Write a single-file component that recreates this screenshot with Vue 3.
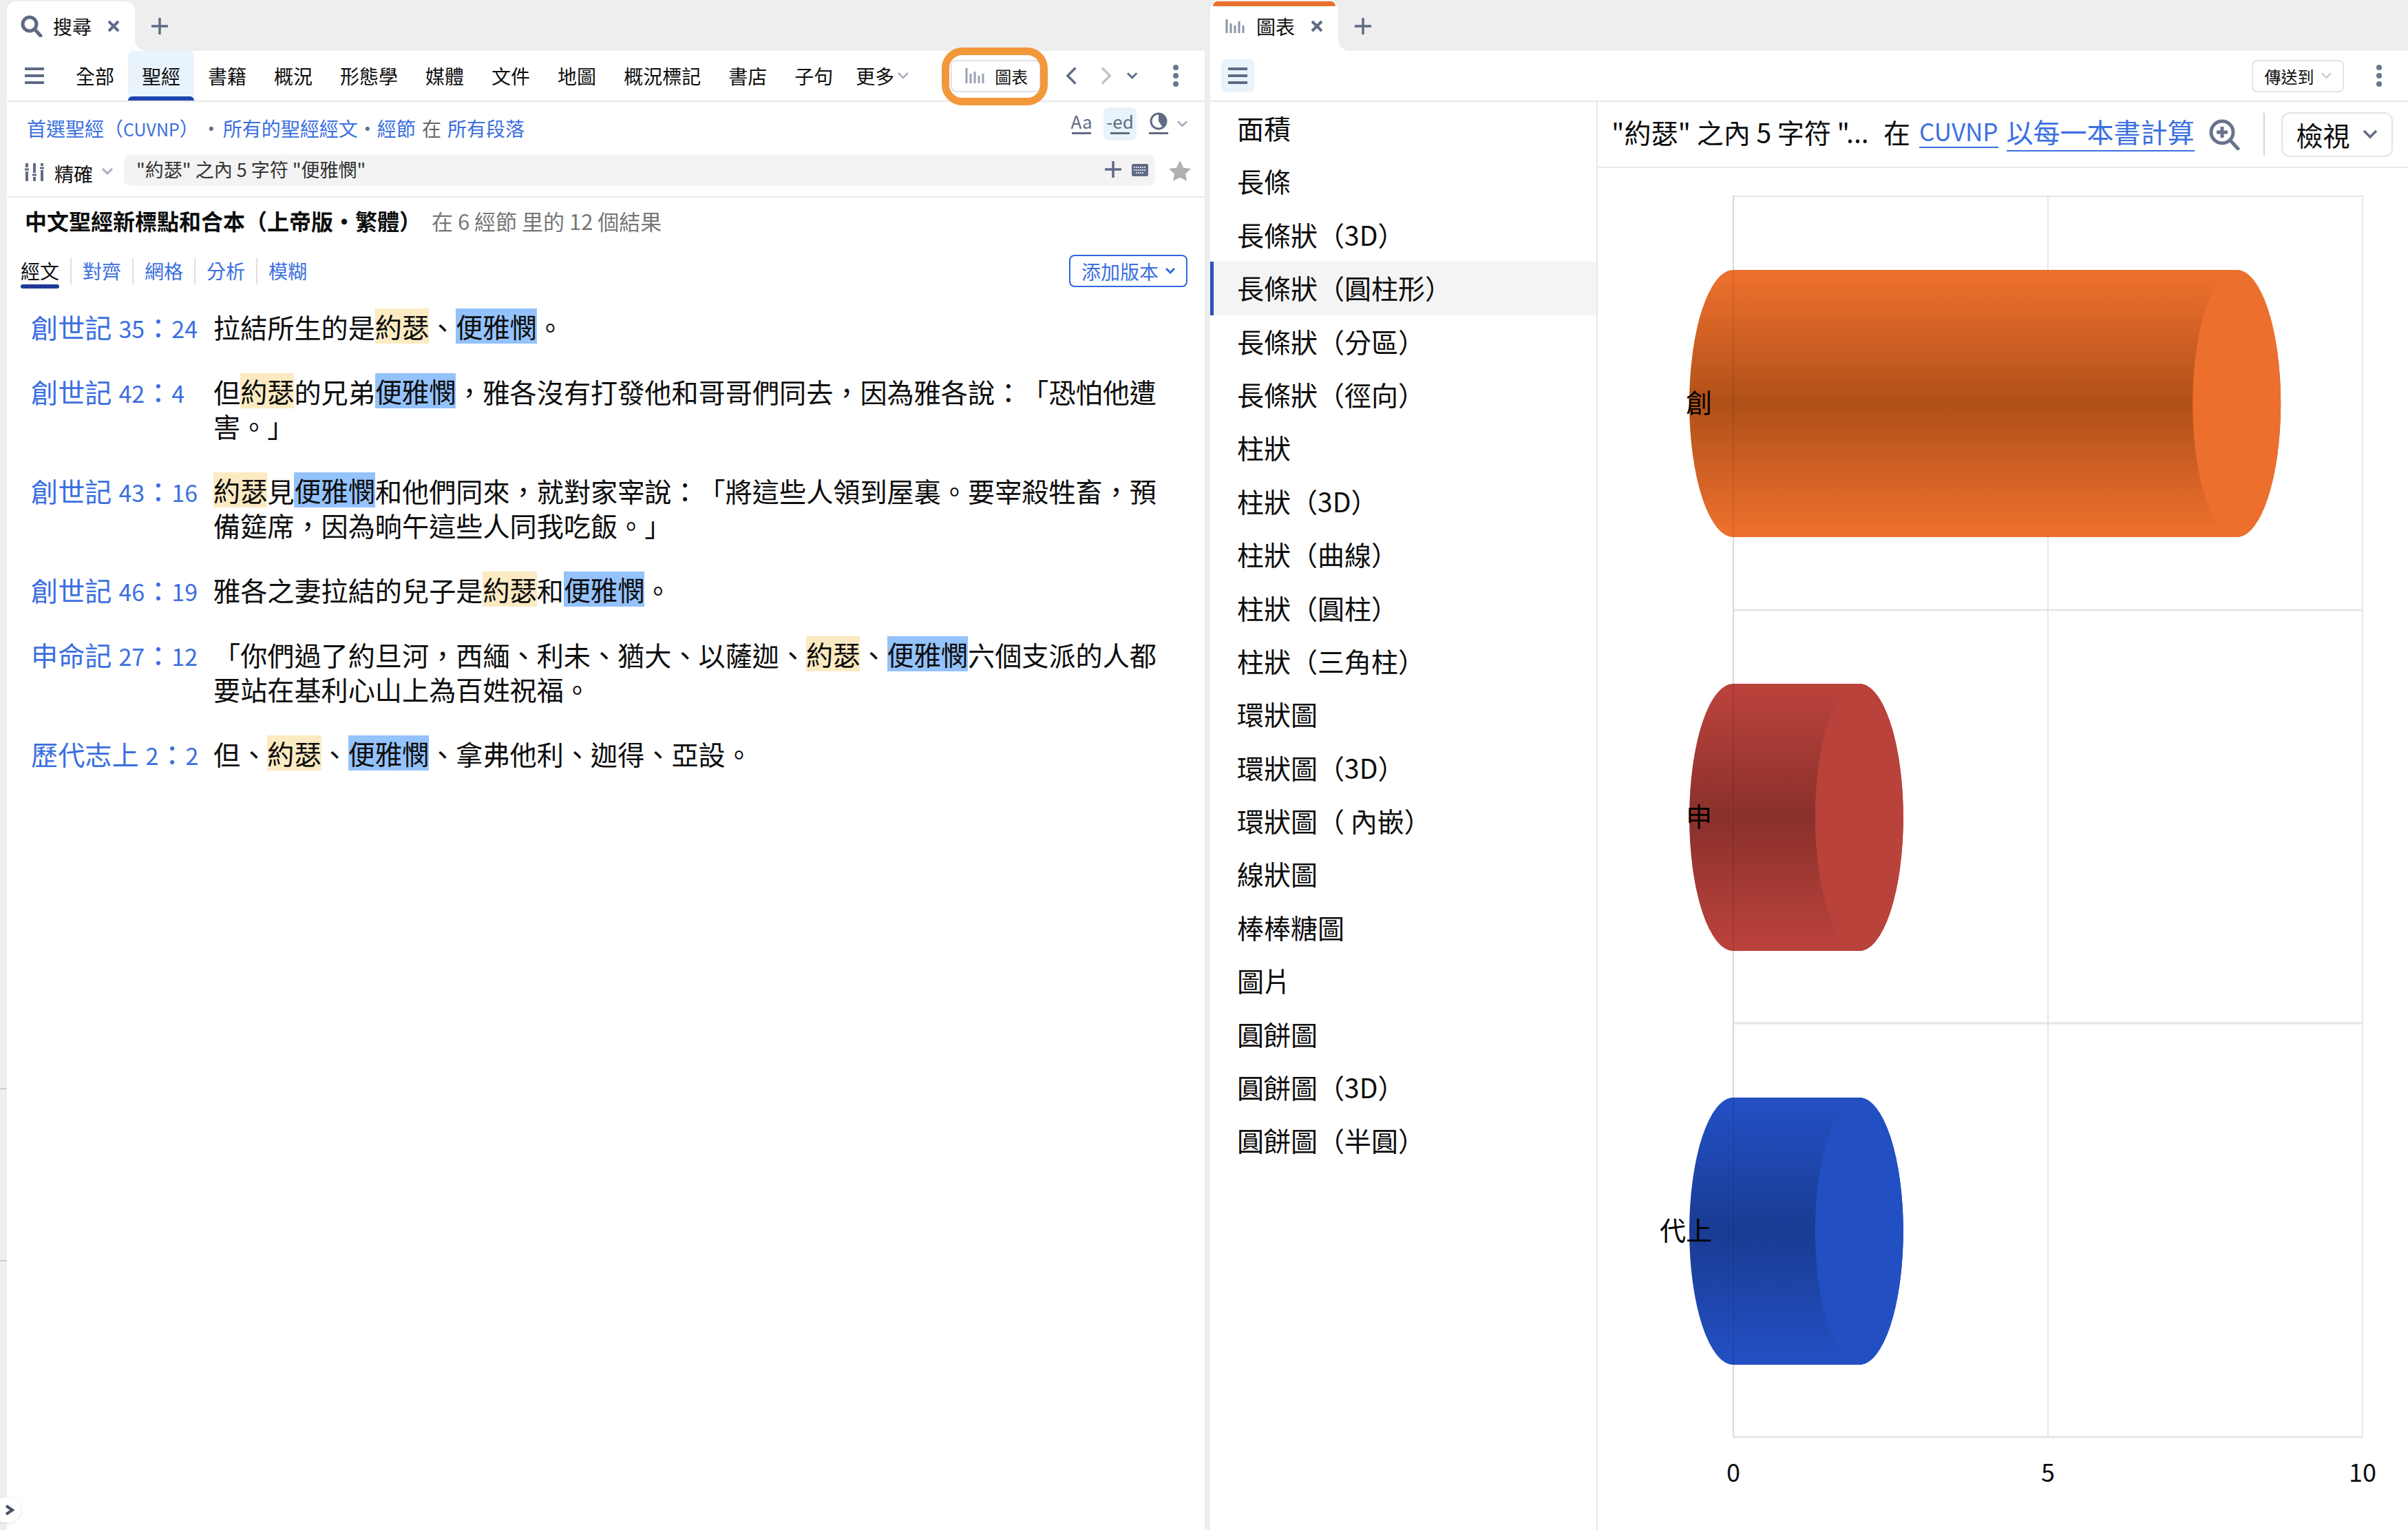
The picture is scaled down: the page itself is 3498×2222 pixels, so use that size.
<script setup>
const navItems = ["全部", "聖經", "書籍", "概況", "形態學", "媒體", "文件", "地圖", "概況標記", "書店", "子句"];
const subTabs = ["經文", "對齊", "網格", "分析", "模糊"];

const verses = [
  { book: "創世記", num: "35", tail: "24", text: "拉結所生的是約瑟、便雅憫。" },
  { book: "創世記", num: "42", tail: "4", text: "但約瑟的兄弟便雅憫，雅各沒有打發他和哥哥們同去，因為雅各說：「恐怕他遭害。」" },
  { book: "創世記", num: "43", tail: "16", text: "約瑟見便雅憫和他們同來，就對家宰說：「將這些人領到屋裏。要宰殺牲畜，預備筵席，因為晌午這些人同我吃飯。」" },
  { book: "創世記", num: "46", tail: "19", text: "雅各之妻拉結的兒子是約瑟和便雅憫。" },
  { book: "申命記", num: "27", tail: "12", text: "「你們過了約旦河，西緬、利未、猶大、以薩迦、約瑟、便雅憫六個支派的人都要站在基利心山上為百姓祝福。" },
  { book: "歷代志上", num: "2", tail: "2", text: "但、約瑟、便雅憫、拿弗他利、迦得、亞設。" },
];

const parts = (text) => text.split(/(約瑟|便雅憫)/).filter(Boolean);
const markClass = (part) => (part === "約瑟" ? "mark-a" : part === "便雅憫" ? "mark-b" : "");

const chartTypes = [
  "面積", "長條", "長條狀（3D）", "長條狀（圓柱形）", "長條狀（分區）", "長條狀（徑向）", "柱狀", "柱狀（3D）",
  "柱狀（曲線）", "柱狀（圓柱）", "柱狀（三角柱）", "環狀圖", "環狀圖（3D）", "環狀圖（ 內嵌）", "線狀圖", "棒棒糖圖",
  "圖片", "圓餅圖", "圓餅圖（3D）", "圓餅圖（半圓）",
];

const x0 = 2518;
const unit = 91.4;
const bars = [
  { id: "g1", label: "創", value: 8, cy: 586, cap: "#ec6f2d", dark: "#af5019" },
  { id: "g2", label: "申", value: 2, cy: 1187, cap: "#b9423b", dark: "#8a302b" },
  { id: "g3", label: "代上", value: 2, cy: 1788, cap: "#224fc2", dark: "#1a3b92" },
];
const rx = 64;
const ry = 194;
const bodyPath = (b) => {
  const x1 = x0 + b.value * unit;
  const t = b.cy - ry;
  const m = b.cy + ry;
  return `M${x0} ${t} A${rx} ${ry} 0 0 0 ${x0} ${m} L${x1} ${m} A${rx} ${ry} 0 0 0 ${x1} ${t} Z`;
};
const capX = (b) => x0 + b.value * unit;
</script>

<template>
  <div class="app">
    <div class="gutter">
      <i class="gutter-line one"></i>
      <i class="gutter-line two"></i>
      <div class="expand">
        <svg width="14" height="16" viewBox="0 0 14 16"><path d="M2 2l9 6-9 6" fill="none" stroke="#4b5268" stroke-width="4" /></svg>
      </div>
    </div>

    <section class="pane left">
      <div class="tabbar">
        <div class="tab">
          <svg class="tab-icon" width="32" height="32" viewBox="0 0 32 32"><circle cx="13" cy="13" r="10" fill="none" stroke="#5f6b85" stroke-width="5" /><path d="M20 20l9 10" stroke="#5f6b85" stroke-width="5" stroke-linecap="round" /></svg>
          <span class="tab-label">搜尋</span>
          <svg class="tab-x" width="18" height="18" viewBox="0 0 18 18"><path d="M2 2l14 14M16 2L2 16" stroke="#5f6b85" stroke-width="4" /></svg>
        </div>
        <svg class="tab-plus" width="24" height="24" viewBox="0 0 24 24"><path d="M12 0v24M0 12h24" stroke="#5f6b85" stroke-width="3.5" /></svg>
      </div>

      <div class="toolbar">
        <svg class="menu" width="28" height="24" viewBox="0 0 28 24"><path d="M0 2h28M0 12h28M0 22h28" stroke="#5f6b85" stroke-width="4" /></svg>
        <nav class="nav">
          <a v-for="item in navItems" :key="item" class="nav-item" :class="{ active: item === '聖經' }">{{ item }}</a>
          <a class="nav-item more">更多<svg width="16" height="10" viewBox="0 0 16 10"><path d="M1 1l7 7 7-7" fill="none" stroke="#a9afbd" stroke-width="2.5" /></svg></a>
        </nav>
        <button class="chart-btn">
          <svg width="28" height="22" viewBox="0 0 28 22"><path d="M2 0v22M8 8v14M14 5v17M20 11v11M26 8v14" stroke="#9aa3b5" stroke-width="3" /></svg>
          <span>圖表</span>
        </button>
        <svg class="prev" width="18" height="26" viewBox="0 0 18 26"><path d="M15 1L3 13l12 12" fill="none" stroke="#5f6b85" stroke-width="3.5" /></svg>
        <svg class="next" width="18" height="26" viewBox="0 0 18 26"><path d="M3 1l12 12L3 25" fill="none" stroke="#bfc3cc" stroke-width="3.5" /></svg>
        <svg class="down" width="16" height="10" viewBox="0 0 16 10"><path d="M1 1l7 7 7-7" fill="none" stroke="#5f6b85" stroke-width="3" /></svg>
        <svg class="dots" width="8" height="32" viewBox="0 0 8 32"><circle cx="4" cy="4" r="4" fill="#6b7690" /><circle cx="4" cy="16" r="4" fill="#6b7690" /><circle cx="4" cy="28" r="4" fill="#6b7690" /></svg>
      </div>

      <div class="filters">
        <div class="crumbs">
          <div class="crumb-text">
            <a>首選聖經（<small>CUVNP</small>）</a><b class="first-dot">•</b><a>所有的聖經經文</a><b>•</b><a>經節</a><span>在</span><a>所有段落</a>
          </div>
          <div class="view-tools">
            <span class="tool">Aa</span>
            <span class="tool on">-ed</span>
            <span class="tool pie">
              <svg width="26" height="28" viewBox="0 0 26 28"><circle cx="13" cy="14" r="11" fill="#fff" stroke="#5f6b85" stroke-width="3" /><path d="M13 14V3a11 11 0 0 1 6 20z" fill="#5f6b85" /></svg>
            </span>
            <svg class="tool-chev" width="15" height="10" viewBox="0 0 16 10"><path d="M1 1l7 7 7-7" fill="none" stroke="#a9afbd" stroke-width="3" /></svg>
          </div>
        </div>
        <div class="search-row">
          <div class="mode">
            <svg width="28" height="26" viewBox="0 0 28 26"><path d="M3 0v6M3 12v14M14 0v14M14 20v6M25 0v4M25 10v16" stroke="#5f6b85" stroke-width="4" /><path d="M0 9h6M11 17h6M22 7h6" stroke="#5f6b85" stroke-width="3" /></svg>
            <span>精確</span>
            <svg width="16" height="10" viewBox="0 0 16 10"><path d="M1 1l7 7 7-7" fill="none" stroke="#a9afbd" stroke-width="3" /></svg>
          </div>
          <div class="search-box">
            <span class="query">"約瑟" 之內 5 字符 "便雅憫"</span>
            <svg class="box-plus" width="24" height="24" viewBox="0 0 24 24"><path d="M12 0v24M0 12h24" stroke="#5f6b85" stroke-width="3.5" /></svg>
            <svg class="kbd" width="24" height="18" viewBox="0 0 24 18"><rect width="24" height="18" rx="2" fill="#5f6b85" /><path d="M3 5h18M3 9h18M6 13h12" stroke="#fff" stroke-width="1.5" stroke-dasharray="2 1" /></svg>
          </div>
          <svg class="star" width="32" height="30" viewBox="0 0 32 30"><path d="M16 0l5 10.500 11 1.500-8 7.500 2 10.500-10-5.300L6 30l2-10.500L0 12l11-1.500z" fill="#b0b0b0" /></svg>
        </div>
      </div>

      <div class="result-title">
        <strong>中文聖經新標點和合本（上帝版・繁體）</strong>
        <span>在 6 經節 里的 12 個結果</span>
      </div>

      <div class="subbar">
        <div class="subtabs">
          <a v-for="(t, i) in subTabs" :key="t" class="subtab" :class="{ current: i === 0 }">{{ t }}</a>
        </div>
        <button class="add-version">
          添加版本
          <svg width="14" height="10" viewBox="0 0 14 10"><path d="M1 1l6 6 6-6" fill="none" stroke="#2f68dc" stroke-width="3" /></svg>
        </button>
      </div>

      <div class="verses">
        <div v-for="v in verses" :key="v.book + v.num" class="verse">
          <a class="ref">{{ v.book }}<span class="num first">{{ v.num }}</span>：<span class="num">{{ v.tail }}</span></a>
          <p class="verse-text">
            <template v-for="(p, i) in parts(v.text)" :key="i">
              <span v-if="markClass(p)" :class="markClass(p)">{{ p }}</span>
              <template v-else>{{ p }}</template>
            </template>
          </p>
        </div>
      </div>
    </section>

    <section class="pane right">
      <div class="tabbar">
        <div class="tab chart-tab">
          <svg class="tab-icon" width="28" height="20" viewBox="0 0 28 20"><path d="M2 0v20M8 6v14M14 9v11M20 3v17M26 9v11" stroke="#8b95a9" stroke-width="3" /></svg>
          <span class="tab-label">圖表</span>
          <svg class="tab-x" width="18" height="18" viewBox="0 0 18 18"><path d="M2 2l14 14M16 2L2 16" stroke="#5f6b85" stroke-width="4" /></svg>
        </div>
        <svg class="tab-plus" width="24" height="24" viewBox="0 0 24 24"><path d="M12 0v24M0 12h24" stroke="#5f6b85" stroke-width="3.5" /></svg>
      </div>

      <div class="toolbar chart-toolbar">
        <span class="menu-btn">
          <svg width="28" height="24" viewBox="0 0 28 24"><path d="M0 2h28M0 12h28M0 22h28" stroke="#5f6b85" stroke-width="4" /></svg>
        </span>
        <button class="send">
          傳送到
          <svg width="15" height="10" viewBox="0 0 16 10"><path d="M1 1l7 7 7-7" fill="none" stroke="#c4c8d2" stroke-width="2.500" /></svg>
        </button>
        <svg class="dots" width="8" height="32" viewBox="0 0 8 32"><circle cx="4" cy="4" r="4" fill="#6b7690" /><circle cx="4" cy="16" r="4" fill="#6b7690" /><circle cx="4" cy="28" r="4" fill="#6b7690" /></svg>
      </div>

      <div class="chart-body">
        <aside class="types">
          <div v-for="t in chartTypes" :key="t" class="type" :class="{ selected: t === '長條狀（圓柱形）' }">{{ t }}</div>
        </aside>
        <main class="chart-main">
          <header class="chart-head">
            <span class="chart-title">"約瑟" 之內 5 字符 "...</span>
            <span class="chart-in">在</span>
            <a class="chart-link version">CUVNP</a>
            <a class="chart-link count">以每一本書計算</a>
            <svg class="zoom-icon" width="46" height="46" viewBox="0 0 46 46"><circle cx="20" cy="20" r="16" fill="none" stroke="#68738e" stroke-width="5" /><path d="M20 12v16M12 20h16" stroke="#68738e" stroke-width="5" /><path d="M32 32l11 12" stroke="#68738e" stroke-width="5" stroke-linecap="round" /></svg>
            <i class="head-sep"></i>
            <button class="view-btn">
              檢視
              <svg width="22" height="14" viewBox="0 0 22 14"><path d="M2 2l9 9 9-9" fill="none" stroke="#5f6b85" stroke-width="3.5" /></svg>
            </button>
          </header>
          <svg class="chart" width="1177" height="1978" viewBox="2321 244 1177 1978">
            <defs>
              <linearGradient v-for="b in bars" :id="b.id" :key="b.id" x1="0" y1="0" x2="0" y2="1">
                <stop offset="0.03" :stop-color="b.cap" />
                <stop offset="0.5" :stop-color="b.dark" />
                <stop offset="0.97" :stop-color="b.cap" />
              </linearGradient>
            </defs>
            <g fill="none" stroke="#e6e6e6" stroke-width="2">
              <path d="M2518 285H3432V2087" />
              <path d="M2975 284V2087" />
              <path d="M2518 886H3432M2518 1486H3432" stroke-width="3" />
              <path d="M2518 2087H3432" stroke-width="3" />
              <path d="M2518 284V2087" stroke="#d6d6d6" />
            </g>
            <g v-for="b in bars" :key="b.label">
              <path :d="bodyPath(b)" :fill="`url(#${b.id})`" />
              <ellipse :cx="capX(b)" :cy="b.cy" :rx="rx" :ry="ry" :fill="b.cap" />
              <path :d="`M${x0} ${b.cy - ry}V${b.cy + ry}`" stroke="#000" stroke-opacity="0.08" stroke-width="2" />
              <text class="cat" x="2487" :y="b.cy + 13" text-anchor="end">{{ b.label }}</text>
            </g>
            <text class="tick" x="2518" y="2152" text-anchor="middle">0</text>
            <text class="tick" x="2975" y="2152" text-anchor="middle">5</text>
            <text class="tick" x="3432" y="2152" text-anchor="middle">10</text>
          </svg>
        </main>
      </div>
    </section>
  </div>
</template>

<style scoped>
.app {
  display: flex;
  width: 3498px;
  height: 2222px;
  overflow: hidden;
  background: #eeeeee;
  color: #0d0d0d;
  font-family: "Noto Sans CJK TC", "Noto Sans", sans-serif;
  position: relative;
  text-spacing-trim: space-all;
  text-autospace: no-autospace;
}
button {
  font-family: inherit;
  background: #fff;
  cursor: pointer;
}
.gutter {
  width: 10px;
  flex: none;
}
.gutter-line {
  position: absolute;
  left: 0;
  width: 10px;
  height: 2px;
  background: #ccc;
}
.gutter-line.one {
  top: 1580px;
}
.gutter-line.two {
  top: 1830px;
}
.expand {
  position: absolute;
  left: -12px;
  top: 2175px;
  width: 42px;
  height: 36px;
  padding-left: 19px;
  box-sizing: border-box;
  display: flex;
  align-items: center;
  background: #fff;
  border-radius: 18px;
  box-shadow: 0 1px 4px rgba(0, 0, 0, 0.12);
}
.pane {
  display: flex;
  flex-direction: column;
}
.pane.left {
  width: 1740px;
  flex: none;
  margin-right: 8px;
  background: linear-gradient(#eeeeee 74px, #fff 74px);
}
.pane.right {
  flex: 1;
  min-width: 0;
  background: linear-gradient(#eeeeee 74px, #fff 74px);
}

/* tabs */
.tabbar {
  height: 74px;
  flex: none;
  padding-top: 2px;
  box-sizing: border-box;
  display: flex;
  align-items: center;
}
.tab {
  width: 186px;
  height: 72px;
  flex: none;
  background: #fff;
  border-radius: 14px 14px 0 0;
  display: flex;
  align-items: center;
  box-sizing: border-box;
  padding-left: 20px;
  position: relative;
}
.tab::after {
  content: "";
  position: absolute;
  right: -16px;
  bottom: 0;
  width: 16px;
  height: 16px;
  background: radial-gradient(circle at 100% 0, #eeeeee 15.500px, #fff 16px);
}
.tab-label {
  font-size: 28px;
  line-height: 36px;
  margin-left: 15px;
}
.tab-x {
  margin-left: 23px;
}
.tab-plus {
  margin-left: 24px;
}
.chart-tab {
  padding-left: 22px;
}
.chart-tab::before {
  content: "";
  position: absolute;
  left: 4px;
  right: 4px;
  top: 0;
  height: 7px;
  background: #ec6f2d;
  border-radius: 8px 8px 0 0;
}
.chart-tab .tab-label {
  margin-left: 17px;
}

/* toolbar */
.toolbar {
  height: 74px;
  flex: none;
  background: #fff;
  border-bottom: 2px solid #e8e8e8;
  box-sizing: border-box;
  border-top-right-radius: 10px;
  display: flex;
  align-items: center;
  padding: 0 38px 0 26px;
}
.menu {
  flex: none;
}
.nav {
  display: flex;
  align-self: stretch;
  margin-left: 26px;
  flex: none;
}
.nav-item {
  padding: 0 20px;
  font-size: 28px;
  line-height: 72px;
  position: relative;
  white-space: nowrap;
  flex: none;
}
.nav-item.active {
  background: #e9f3fc;
  border-radius: 8px 8px 0 0;
}
.nav-item.active::after {
  content: "";
  position: absolute;
  left: 0;
  right: 0;
  bottom: 0;
  height: 6px;
  background: #1e45ad;
  border-radius: 6px 6px 0 0;
}
.nav-item.more {
  padding: 0 0 0 13px;
  display: flex;
  align-items: center;
  gap: 5px;
}
.chart-btn {
  margin-left: 61px;
  width: 131px;
  height: 47px;
  border: 2px solid #dfe2e8;
  border-radius: 8px;
  display: flex;
  align-items: center;
  padding: 0 0 0 19px;
  gap: 15px;
  font-size: 24px;
  color: #0d0d0d;
  position: relative;
  flex: none;
}
.chart-btn::after {
  content: "";
  position: absolute;
  left: -15px;
  right: -12px;
  top: -20px;
  bottom: -21px;
  border: 11px solid #f2973a;
  border-radius: 30px;
  pointer-events: none;
}
.prev {
  margin-left: 36px;
}
.next {
  margin-left: 33px;
}
.down {
  margin-left: 21px;
}
.dots {
  margin-left: 52px;
  flex: none;
}

/* filters */
.filters {
  height: 139px;
  flex: none;
  background: #fff;
  border-bottom: 2px solid #e8e8e8;
  box-sizing: border-box;
  padding: 0 25px 0 26px;
}
.crumbs {
  height: 76px;
  display: flex;
  justify-content: space-between;
}
.crumb-text {
  font-size: 28px;
  line-height: 76px;
  margin-left: 3px;
  color: #666;
  white-space: nowrap;
}
.crumb-text a {
  color: #3b6fe0;
}
.crumb-text small {
  font-size: 25px;
}
.crumb-text b {
  font-weight: 400;
  color: #5f6b85;
}
.crumb-text b.first-dot {
  margin: 0 3px 0 4px;
}
.crumb-text span {
  margin: 0 9px;
}
.view-tools {
  display: flex;
  align-items: flex-start;
  padding-top: 8px;
}
.tool {
  width: 48px;
  height: 48px;
  display: flex;
  justify-content: center;
  align-items: center;
  font-size: 26px;
  color: #5f6b85;
  position: relative;
  border-radius: 8px;
  margin-left: 8px;
  line-height: 1;
  padding-bottom: 8px;
  box-sizing: border-box;
}
.tool::after {
  content: "";
  position: absolute;
  left: 10px;
  right: 10px;
  bottom: 9px;
  height: 3px;
  background: #5f6b85;
}
.tool.on {
  background: #e9f3fc;
}
.tool-chev {
  margin: 19px 0 0 3px;
}
.search-row {
  height: 46px;
  display: flex;
  align-items: flex-start;
}
.mode {
  width: 154px;
  margin-right: -10px;
  flex: none;
  display: flex;
  align-items: center;
  font-size: 28px;
  line-height: 36px;
  margin-top: 8px;
}
.mode span {
  margin: 0 13px 0 15px;
  position: relative;
  top: 2px;
}
.mode svg:last-child {
  position: relative;
  top: -1px;
}
.search-box {
  width: 1498px;
  height: 46px;
  flex: none;
  background: #f3f3f3;
  border-radius: 10px;
  display: flex;
  align-items: center;
  padding: 0 10px 0 18px;
  box-sizing: border-box;
}
.query {
  font-size: 27px;
  line-height: 36px;
  color: #333;
  flex: 1;
  margin-bottom: 3px;
}
.box-plus {
  margin: 0 15px 2px 0;
}
.star {
  margin: 9px 0 0 20px;
  flex: none;
}

/* results */
.result-title {
  height: 66px;
  flex: none;
  background: #fff;
  display: flex;
  align-items: center;
  padding-left: 26px;
  font-size: 32px;
  white-space: nowrap;
}
.result-title strong {
  font-weight: 700;
  width: 591px;
  flex: none;
}
.result-title span {
  color: #777;
  font-size: 31px;
}
.subbar {
  height: 66px;
  flex: none;
  background: #fff;
  display: flex;
  justify-content: space-between;
  align-items: flex-start;
  padding: 17px 25px 0 20px;
  box-sizing: border-box;
}
.subtabs {
  display: flex;
  margin-top: 4px;
}
.subtab {
  height: 39px;
  line-height: 39px;
  font-size: 28px;
  color: #3b6fe0;
  padding: 0 16px;
  border-right: 2px solid #e0e0e0;
  position: relative;
}
.subtab:first-child {
  padding-left: 0;
  color: #0d0d0d;
}
.subtab:last-child {
  border-right: none;
}
.subtab.current::after {
  content: "";
  position: absolute;
  left: 0;
  width: 56px;
  bottom: -6px;
  height: 6px;
  border-radius: 3px;
  background: #1e3a96;
}
.add-version {
  width: 172px;
  height: 47px;
  border: 2px solid #2f68dc;
  border-radius: 8px;
  color: #3b6fe0;
  font-size: 28px;
  display: flex;
  align-items: center;
  justify-content: center;
  gap: 10px;
  padding: 0;
  white-space: nowrap;
}
.verses {
  flex: 1;
  background: #fff;
  padding: 30px 0 0 35px;
}
.verse {
  display: flex;
  margin-bottom: 44px;
  font-size: 39.150px;
  line-height: 50px;
}
.ref {
  width: 265px;
  flex: none;
  color: #3b6fe0;
  white-space: nowrap;
}
.num {
  font-size: 34px;
  line-height: 1;
}
.num.first {
  margin-left: 10px;
}
.verse-text {
  width: 1378px;
  margin: 0;
}
.mark-a,
.mark-b {
  display: inline-block;
  line-height: 51px;
  height: 51px;
  margin: -1px 0;
  vertical-align: top;
}
.mark-a {
  background: #fbeac2;
}
.mark-b {
  background: #94c2fb;
}

/* right pane */
.chart-toolbar {
  padding: 0 38px 0 16px;
}
.menu-btn {
  width: 48px;
  height: 48px;
  background: #e9f3fc;
  border-radius: 8px;
  display: flex;
  align-items: center;
  justify-content: center;
}
.send {
  margin-left: auto;
  width: 134px;
  height: 47px;
  border: 2px solid #e4e4e4;
  border-radius: 8px;
  font-size: 24px;
  display: flex;
  align-items: center;
  justify-content: center;
  gap: 10px;
  padding: 0;
  color: #0d0d0d;
}
.send + .dots {
  margin-left: 47px;
}
.chart-body {
  flex: 1;
  display: flex;
  background: #fff;
  min-height: 0;
}
.types {
  width: 563px;
  flex: none;
  border-right: 2px solid #e8e8e8;
  box-sizing: border-box;
}
.type {
  height: 77.400px;
  line-height: 75px;
  padding-left: 39px;
  font-size: 39px;
  white-space: nowrap;
}
.type.selected {
  background: #f4f4f4;
  box-shadow: inset 5px 0 0 #2a52be;
}
.chart-main {
  flex: 1;
  min-width: 0;
  display: flex;
  flex-direction: column;
}
.chart-head {
  height: 96px;
  flex: none;
  border-bottom: 2px solid #e8e8e8;
  box-sizing: border-box;
  display: flex;
  align-items: center;
  padding: 0 0 0 20px;
  font-size: 39px;
  white-space: nowrap;
}
.chart-title {
  width: 395px;
  flex: none;
  position: relative;
  top: -4px;
}
.chart-in {
  margin-right: 13px;
  position: relative;
  top: -4px;
}
.chart-link {
  color: #3b6fe0;
  border-bottom: 2px solid #3b6fe0;
  line-height: 46px;
  margin-right: 12px;
  position: relative;
  top: -4px;
}
.chart-link.version {
  font-size: 35px;
}
.chart-link.count {
  padding-bottom: 5px;
  margin-top: 5px;
}
.zoom-icon {
  margin-left: 8px;
  flex: none;
}
.head-sep {
  width: 2px;
  height: 62px;
  background: #d4d4d4;
  margin-left: 34px;
}
.view-btn {
  margin-left: 24px;
  width: 162px;
  height: 65px;
  border: 2px solid #e4e4e4;
  border-radius: 12px;
  font-size: 39px;
  color: #0d0d0d;
  display: flex;
  align-items: center;
  justify-content: center;
  gap: 18px;
  padding: 0;
}
.chart {
  display: block;
  flex: none;
}
.cat {
  font-size: 38px;
  fill: #000;
}
.tick {
  font-size: 36px;
  fill: #0d0d0d;
}
</style>

<style>
html,
body {
  margin: 0;
  background: #eeeeee;
}
</style>
